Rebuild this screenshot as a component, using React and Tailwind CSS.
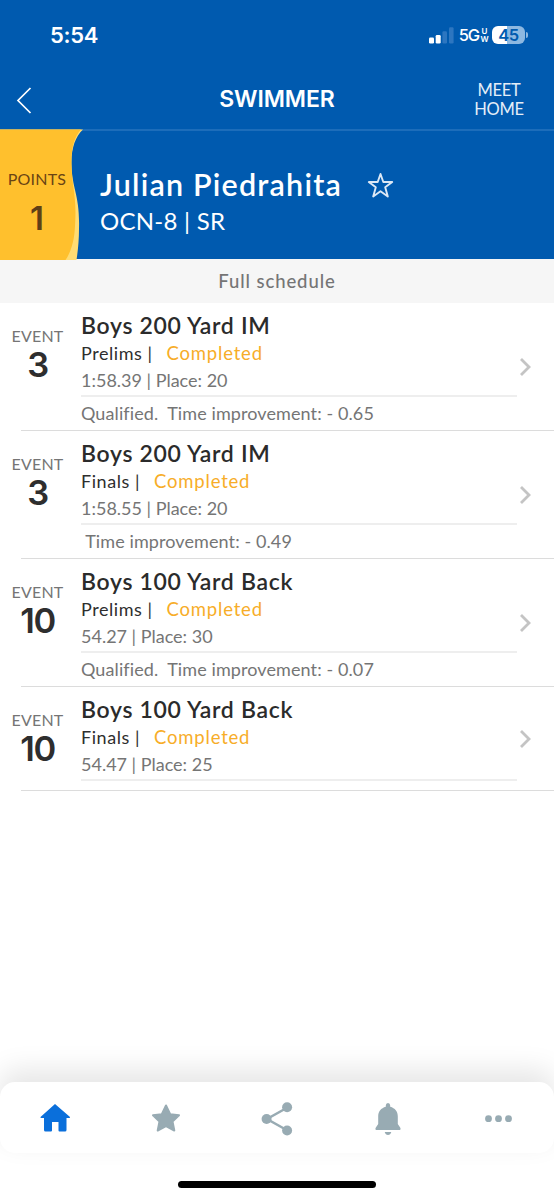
const events = [
  {
    number: 3,
    title: 'Boys 200 Yard IM',
    round: 'Prelims',
    result: '1:58.39 | Place: 20',
    note: 'Qualified.\u00a0 Time improvement: - 0.65',
  },
  {
    number: 3,
    title: 'Boys 200 Yard IM',
    round: 'Finals',
    result: '1:58.55 | Place: 20',
    note: '\u00a0Time improvement: - 0.49',
  },
  {
    number: 10,
    title: 'Boys 100 Yard Back',
    round: 'Prelims',
    result: '54.27 | Place: 30',
    note: 'Qualified.\u00a0 Time improvement: - 0.07',
  },
  {
    number: 10,
    title: 'Boys 100 Yard Back',
    round: 'Finals',
    result: '54.47 | Place: 25',
  },
]

export default function App() {
  return (
    <div className="w-[554px] h-[1200px] flex flex-col bg-white overflow-hidden font-['Lato',sans-serif]">
      <StatusBar />
      <NavBar />
      <SwimmerHeader />
      <div className="h-[44px] pt-[2px] shrink-0 bg-[#f6f6f6] flex items-center justify-center text-[18.5px] font-medium tracking-[0.9px] text-[#757575]">
        Full schedule
      </div>
      <div className="flex-1">
        {events.map((event, i) => (
          <EventRow key={i} {...event} />
        ))}
      </div>
      <TabBar />
    </div>
  )
}

function StatusBar() {
  return (
    <div className="h-[70px] shrink-0 bg-[#005aaf] text-white flex items-center justify-between pl-[50px] pr-[26px] font-['Inter',sans-serif]">
      <span className="text-[22px] font-semibold tracking-[-0.3px]">5:54</span>
      <div className="flex items-center">
        <svg className="w-[25px] h-[17px]" viewBox="0 0 25 17">
          <rect x="0" y="10.5" width="5" height="6" rx="1.3" fill="#fff" />
          <rect x="6.7" y="8" width="5" height="8.5" rx="1.3" fill="#fff" />
          <rect x="13.4" y="4.3" width="4.6" height="12.2" rx="1.3" fill="#2d76c0" />
          <rect x="20" y="0.3" width="4.6" height="16.2" rx="1.3" fill="#2d76c0" />
        </svg>
        <span className="ml-[5px] text-[16.5px] font-medium tracking-[-1.2px]">5G</span>
        <span className="ml-[2px] mr-[4px] w-[7px] flex flex-col items-center text-[8px] leading-[8px] font-semibold">
          <span>U</span>
          <span>W</span>
        </span>
        <div className="w-[33px] h-[18px] rounded-[6px] bg-linear-to-r from-white from-45% to-[#8db8e1] to-45% flex items-center justify-center text-[16.5px] font-semibold tracking-[-0.4px] text-[#005aaf]">
          45
        </div>
        <div className="ml-[1px] w-[2px] h-[6px] rounded-r-full bg-[#8db8e1]" />
      </div>
    </div>
  )
}

function NavBar() {
  return (
    <div className="h-[59px] shrink-0 bg-[#005aaf] text-white flex items-center">
      <div className="w-[100px] pl-[16px]">
        <svg className="w-[16px] h-[28px]" viewBox="0 0 16 28" fill="none">
          <path d="M14.5 2L2 14.5L14.5 27" stroke="currentColor" strokeWidth="1.7" />
        </svg>
      </div>
      <h1 className="flex-1 text-center text-[23px] font-semibold tracking-[-0.1px] font-['Inter',sans-serif]">SWIMMER</h1>
      <div className="w-[100px] pr-[10px] text-center text-[16.5px] leading-[19px] tracking-[-0.3px] text-[#e4eef8]">
        MEET
        <br />
        HOME
      </div>
    </div>
  )
}

function SwimmerHeader() {
  return (
    <div className="h-[130px] shrink-0 bg-[#005aaf] flex text-white border-t-2 border-[#1d6dba]">
      <div className="relative w-[84px] h-[131px] -mt-[2px] shrink-0">
        <svg className="absolute inset-0 w-[84px] h-[131px]" viewBox="0 0 84 131">
          <path d="M0 0.5H83C75 8 71 20 71.5 36C72 60 80 66 79 100C79 111 78 121 76.5 131H0Z" fill="#ffdc73" />
          <path d="M0 0.5H81C74 8 71 20 71.5 36C72 60 77 66 75 97C74.5 111 71 123 65.5 131H0Z" fill="#ffc02d" />
        </svg>
        <div className="relative w-[74px] pt-[38px] flex flex-col items-center text-[#6a4414]">
          <span className="text-[16px] leading-[24px] tracking-[0.2px]">POINTS</span>
          <span className="mt-[7px] text-[33px] leading-[40px] font-semibold font-['Inter',sans-serif] text-[#5f3f16]">1</span>
        </div>
      </div>
      <div className="pl-[16px] pt-[34px]">
        <div className="flex items-center">
          <h2 className="text-[30.5px] leading-[38px] font-semibold tracking-[1.2px]">Julian Piedrahita</h2>
          <svg className="ml-[25px] mt-[3px] w-[27px] h-[27px]" viewBox="0 0 27 27" fill="none">
            <path
              d="M13.5 2L16.3 10H25.2L18.2 15.3L20.8 24.5L13.5 19.2L6.2 24.5L8.8 15.3L1.8 10H10.7Z"
              stroke="#dce8f5"
              strokeWidth="1.9"
              strokeLinejoin="round"
            />
          </svg>
        </div>
        <p className="text-[24px] leading-[36px] tracking-[0.25px]">OCN-8 | SR</p>
      </div>
    </div>
  )
}

function EventRow({ number, title, round, result, note }) {
  return (
    <div>
      <div className="flex">
        <div className="w-[75px] pt-[21px] flex flex-col items-center">
          <span className="text-[16px] leading-[24px] tracking-[0.2px] text-[#757575]">EVENT</span>
          <span className="text-[34.5px] leading-[34px] font-semibold tracking-[-1.5px] font-['Inter',sans-serif] text-[#2e2e2e]">
            {number}
          </span>
        </div>
        <div className="w-[436px] ml-[6px] pt-[9px] whitespace-nowrap">
          <h3 className="text-[23px] leading-[27px] font-semibold tracking-[0.68px] text-[#2b2b2b]">{title}</h3>
          <div className="flex text-[18px] leading-[28px] tracking-[0.55px]">
            <span className="text-[#2e2e2e]">{round} |</span>
            <span className="ml-[14px] text-[18.5px] tracking-[0.8px] text-[#f7ad28]">Completed</span>
          </div>
          <p className="text-[18px] leading-[27px] text-[#757575]">{result}</p>
          <div className="mt-[1px] h-[2px] bg-[#eeeeee]" />
          {note ? (
            <p className="h-[33px] text-[18px] leading-[33px] tracking-[0.1px] text-[#757575]">{note}</p>
          ) : (
            <div className="h-[9px]" />
          )}
        </div>
        <svg className="self-center ml-[2px] w-[12px] h-[20px]" viewBox="0 0 12 20" fill="none">
          <path d="M2 2L10 10L2 18" stroke="#c4c4c4" strokeWidth="2.8" />
        </svg>
      </div>
      <div className="ml-[21px] h-px bg-[#dcdcdc]" />
    </div>
  )
}

function TabBar() {
  return (
    <div className="h-[118px] shrink-0 flex flex-col">
      <div className="h-[71px] pt-[2px] rounded-[15px] bg-white shadow-[0_-12px_28px_rgba(0,0,0,0.1)] flex items-center text-[#98abb3]">
        <Tab>
          <path
            d="M16 1L31 14Q31.5 15 30 15H27.5V27Q27.5 28.5 26 28.5H20.500Q19.5 28.5 19.5 27.5V19H13V27.5Q13 28.5 12 28.5H6.500Q5 28.5 5 27V15H2.500Q1 15 1.5 14Z"
            fill="#0a6fdb"
          />
        </Tab>
        <Tab>
          <path
            d="M16 2.5L20.2 11.2L29 12.3L22.5 18.5L24.3 27.5L16 23.2L7.7 27.5L9.5 18.5L3 12.3L11.8 11.2Z"
            fill="currentColor"
            stroke="currentColor"
            strokeWidth="2"
            strokeLinejoin="round"
          />
        </Tab>
        <Tab>
          <path d="M26.5 4.5L6 16L26.5 27.5" fill="none" stroke="currentColor" strokeWidth="2.5" />
          <circle cx="26.1" cy="4.3" r="5" fill="currentColor" />
          <circle cx="5.6" cy="16" r="5" fill="currentColor" />
          <circle cx="26.1" cy="27.5" r="5" fill="currentColor" />
        </Tab>
        <Tab>
          <path
            d="M13.8 2.5Q13.8 0 16 0T18.2 2.5V3.7C23 5 25.8 8.5 25.8 13.5V21L28.3 24.7Q29.3 27 27 27H5Q2.7 27 3.7 24.7L6.2 21V13.5C6.2 8.5 9 5 13.8 3.7ZM12.7 29H19.3Q18.5 32 16 32T12.7 29Z"
            fill="currentColor"
          />
        </Tab>
        <Tab>
          <circle cx="5.5" cy="15.7" r="3.4" fill="currentColor" />
          <circle cx="15.5" cy="15.7" r="3.4" fill="currentColor" />
          <circle cx="25.5" cy="15.7" r="3.4" fill="currentColor" />
        </Tab>
      </div>
      <div className="mt-[28px] mx-auto w-[198px] h-[7px] rounded-full bg-black" />
    </div>
  )
}

function Tab({ children }) {
  return (
    <button className="flex-1 flex justify-center">
      <svg className="w-[32px] h-[32px] overflow-visible" viewBox="0 0 32 32">
        {children}
      </svg>
    </button>
  )
}
